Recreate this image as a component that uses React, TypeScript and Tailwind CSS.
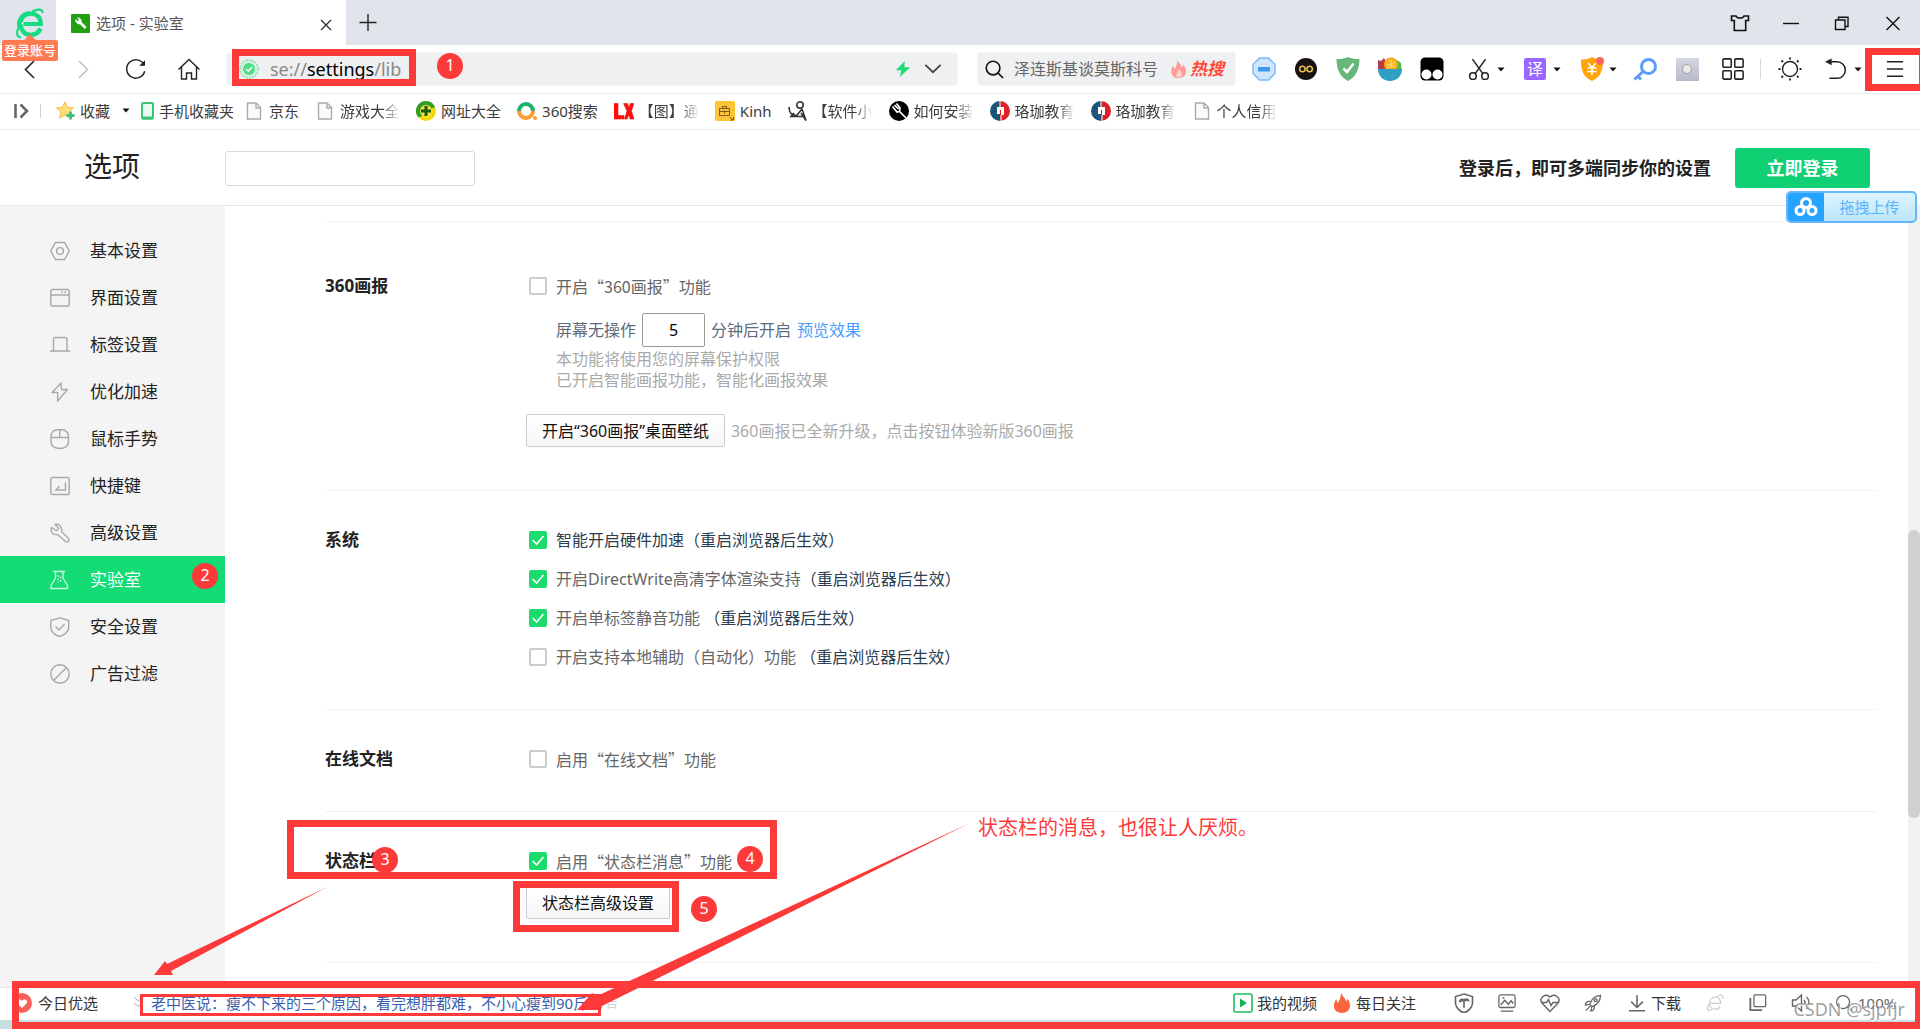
import React, { useState } from "react";

type SvgProps = { size?: number; box?: string; className?: string; children: React.ReactNode };

function Svg({ size = 20, box = "0 0 20 20", className = "", children }: SvgProps) {
  return (
    <svg width={size} height={size} viewBox={box} fill="none" stroke="currentColor" strokeWidth="1.4" className={"shrink-0 " + className} aria-hidden="true">
      {children}
    </svg>
  );
}

function Caret() {
  return (
    <svg width="8" height="5" viewBox="0 0 8 5" className="shrink-0" aria-hidden="true">
      <path d="M0.5 0.5h7L4 4.5z" fill="#111" />
    </svg>
  );
}

function Badge({ n, className }: { n: number; className: string }) {
  return (
    <span className={"absolute z-20 flex h-[26px] w-[26px] justify-center rounded-full bg-[#fd3a3a] text-base leading-6 text-white " + className}>{n}</span>
  );
}

/* ---------- title bar ---------- */

function TitleBar() {
  return (
    <header className="flex h-[45px] shrink-0 bg-[#e1e4ea]">
      <div className="relative flex w-14 shrink-0 justify-center pl-1">
        <svg width="30" height="31" viewBox="0 0 30 31" className="mt-2" aria-hidden="true">
          <path d="M15 5.2A11 11 0 0 0 5 20" fill="none" stroke="#15dc82" strokeWidth="4.4" />
          <path d="M8.5 16H25.8C25.8 9.5 21.5 5.6 15.6 5.6C10.5 5.6 6.5 9.2 5.8 14" fill="none" stroke="#15dc82" strokeWidth="4.2" />
          <path d="M25.5 20.5C23.5 25 20 27 15.6 27C9.5 27 5.6 22 6 16.5" fill="none" stroke="#15dc82" strokeWidth="4.4" />
          <path d="M27.5 5C28 1 23 0.5 17 3.8M5.5 16C1 23 0.8 29.5 6 29" fill="none" stroke="#15dc82" strokeWidth="2.2" />
        </svg>
        <button className="absolute left-0.5 top-10 z-20 h-[21px] w-[56px] rounded-[2px] bg-[#ff7a50] text-[13px] font-medium leading-[21px] text-white">
          登录账号
          <span className="absolute -top-1 left-6 h-2 w-2 rotate-45 bg-[#ff7a50]" />
        </button>
      </div>
      <div className="flex w-[290px] items-center bg-white pl-[15px] pr-2.5 text-[15px] text-[#555]">
        <Svg size={19} className="mt-0.5">
          <rect width="20" height="20" rx="1" fill="#20a010" stroke="none" />
          <path d="M5 5.5a4 4 0 0 0 4.4 5l5 5 1.8-1.9-5.2-4.9A4 4 0 0 0 6.8 4l2 2.2-1.6 1.7z" fill="#fff" stroke="#fff" strokeWidth="0.6" />
        </Svg>
        <span className="ml-1.5 grow leading-10">选项 - 实验室</span>
        <button aria-label="关闭标签" className="mt-1 text-[#333]">
          <Svg><path d="M5 5l10 10M15 5L5 15" /></Svg>
        </button>
      </div>
      <button aria-label="新建标签" className="ml-2.5 text-[#222]">
        <Svg size={24} box="0 0 24 24"><path d="M12 3v17M3.500 11.500h17" /></Svg>
      </button>
      <div className="ml-auto flex pr-0.5 text-[#111]">
        <button aria-label="皮肤" className="flex w-[51px] items-center justify-center">
          <Svg><path d="M1.500 3h4.500c1 2.700 7 2.700 8 0h4.500v4.500h-2.800v10H4.300v-10H1.500z" strokeWidth="1.600" /></Svg>
        </button>
        <button aria-label="最小化" className="flex w-[51px] items-center justify-center">
          <Svg><path d="M2 10.500h16" /></Svg>
        </button>
        <button aria-label="还原" className="flex w-[51px] items-center justify-center">
          <Svg><path d="M3.500 7h9.500v9.500H3.500zM6.500 7V4.200h9.500v9.300H13" /></Svg>
        </button>
        <button aria-label="关闭" className="flex w-[51px] items-center justify-center">
          <Svg><path d="M3.500 4l13 13M16.500 4l-13 13" /></Svg>
        </button>
      </div>
    </header>
  );
}

/* ---------- tool bar ---------- */

const navButton = "flex w-[53px] items-center justify-center";
const extButton = "flex w-[42px] items-center justify-center";
const menuButton = "flex w-14 items-center gap-[7px] pl-[15px]";

function ToolBar() {
  return (
    <div className="flex h-[49px] shrink-0 items-stretch border-b border-[#ececee] bg-white pl-[3px] text-[#222]">
      <button aria-label="后退" className={navButton}><Svg size={22} box="0 0 22 22"><path d="M15 3L6.500 11.500L15 20" strokeWidth="1.600" /></Svg></button>
      <button aria-label="前进" className={navButton + " text-[#bbb]"}><Svg size={22} box="0 0 22 22"><path d="M7 3L15.500 11.500L7 20" /></Svg></button>
      <button aria-label="刷新" className={navButton}>
        <Svg size={22} box="0 0 24 24"><path d="M20.500 7A10 10 0 1 0 21.500 14.500" strokeWidth="1.600" /><path d="M21.800 2.500V8.500H15.500z" fill="#222" stroke="none" /></Svg>
      </button>
      <button aria-label="主页" className={navButton}>
        <Svg size={24} box="0 0 24 24"><path d="M1.500 12.500L12 2.500L22.500 12.500M4.500 10v12h5v-6h5v6h5V10" strokeWidth="1.400" /></Svg>
      </button>
      <div className="relative ml-[11px] mt-[7px] flex h-[34px] min-w-0 grow items-center rounded-[4px] border border-[#f4f5f7] bg-[#eff0f2] pl-3 pr-[15px]">
        <Svg size={20}>
          <circle cx="10" cy="10" r="9" stroke="#7fe3a4" strokeDasharray="2 1" strokeWidth="1.500" />
          <circle cx="10" cy="10" r="7.200" stroke="#b9efcd" strokeWidth="1" />
          <circle cx="10" cy="10" r="6" fill="#4fdc88" stroke="none" />
          <path d="M7 10l2.300 2.200L13.200 8" stroke="#fff" />
        </Svg>
        <div className="ml-[11px] grow text-lg leading-8 text-[#888]">
          se://<span className="text-black">settings</span>/lib
        </div>
        <Svg size={18} className="mr-3"><path d="M12 1L2 11.500h6L6.500 19L18 8h-6.500z" fill="#1fdc74" stroke="none" /></Svg>
        <button aria-label="展开"><Svg size={18}><path d="M1.500 5.500L10 13.500L18.500 5.500" strokeWidth="2" stroke="#444" /></Svg></button>
        <span className="absolute -top-1 left-[5px] h-[37px] w-[184px] border-[7px] border-[#fd3a3a]" />
        <Badge n={1} className="left-[210px] top-0" />
      </div>
      <div className="ml-[19px] mt-[7px] flex h-[34px] w-[259px] shrink-0 items-center rounded-[4px] border border-[#f4f5f7] bg-[#eff0f2] pl-[7px] text-base">
        <Svg size={19}><circle cx="8.500" cy="8.500" r="7.200" stroke="#111" strokeWidth="1.700" /><path d="M13.500 13.500l5.500 5.500" stroke="#111" strokeWidth="1.700" /></Svg>
        <input aria-label="搜索" defaultValue="泽连斯基谈莫斯科号" className="ml-2 w-[154px] bg-transparent pl-0.5 leading-8 text-[#666] outline-none" />
        <Svg size={18} className="ml-1"><path d="M8 0c2 4 5 5 5 9 1-1 1.400-2.500 1.200-4C20 10 19 20 10 20C0 20 0 10 4 6c0 2 .5 3 1.500 4C7 7 8.500 4 8 0z" fill="#ff9c95" stroke="none" /><path d="M10 10c2 3 4 4 3 7c-1 3-6 3-6 0c0-2 2-4 3-7z" fill="#ffd5d1" stroke="none" /></Svg>
        <b className="ml-0.5 text-[17px] italic text-[#ff4a3c]">热搜</b>
      </div>
      <div className="ml-[7px] flex shrink-0">
        <button aria-label="拦截" className={extButton}>
          <Svg size={24} box="0 0 24 24"><path d="M7.500 1h9L23 7.500v9L16.500 23h-9L1 16.500v-9z" fill="#cfe6fd" stroke="#78b7fa" /><rect x="6" y="10" width="12" height="4.500" fill="#3f97f6" stroke="none" /></Svg>
        </button>
        <button aria-label="无限" className={extButton}>
          <Svg size={22}><circle cx="10" cy="10" r="10" fill="#181210" stroke="none" /><circle cx="6.700" cy="10" r="2.500" stroke="#e9bd4f" /><circle cx="13.300" cy="10" r="2.500" stroke="#e9bd4f" /></Svg>
        </button>
        <button aria-label="防护" className={extButton}>
          <Svg size={24} box="0 0 24 24"><path d="M12 0c4 1.800 8 2.300 11.500 2C23.500 12 20 20 12 24C4 20 .5 12 .5 2C4 2.300 8 1.800 12 0z" fill="#67b77a" stroke="none" /><path d="M7.500 11.500l3.500 3.500l6.500-8.500" stroke="#fff" strokeWidth="2.500" /></Svg>
        </button>
        <button aria-label="果篮" className={extButton}>
          <Svg size={24} box="0 0 24 24"><path d="M0 12V3l3 1l3-3l6 11z" fill="#b53c48" stroke="none" /><path d="M16 12l3-9l4 3l.5 6z" fill="#53b848" stroke="none" /><circle cx="13" cy="7.500" r="6.500" fill="#fbb61c" stroke="#f59a12" strokeWidth="1.200" /><path d="M13 3v8M8.500 7l9 3M17 5l-8 6" stroke="#ffe08a" strokeWidth="1" /><path d="M0 12h24c0 7-5 12-12 12S0 19 0 12z" fill="#2f9fc4" stroke="none" /></Svg>
        </button>
        <button aria-label="脚本" className={extButton}>
          <Svg size={24} box="0 0 24 24"><rect x=".5" y=".5" width="23" height="23" rx="4.500" fill="#000" stroke="none" /><circle cx="6.500" cy="17.500" r="5" fill="#fff" stroke="none" /><circle cx="17.500" cy="17.500" r="5" fill="#fff" stroke="none" /></Svg>
        </button>
        <button aria-label="截图" className={menuButton}>
          <Svg size={22}><circle cx="4.500" cy="16.500" r="3" /><circle cx="15.500" cy="16.500" r="3" /><path d="M4 1l9.500 13.200M16 1L6.500 14.200" /></Svg>
          <Caret />
        </button>
        <button aria-label="翻译" className={menuButton}>
          <span className="flex h-[22px] w-[22px] items-center justify-center rounded-[2px] bg-[#9966ff] text-base leading-none text-white">译</span>
          <Caret />
        </button>
        <button aria-label="优惠" className={menuButton}>
          <Svg size={24} box="0 0 24 24" className="-mr-0.5"><path d="M12 0c3 2 7 2.500 11 2.500C23 13 21 20 12 24C3 20 1 13 1 2.500C5 2.500 9 2 12 0z" fill="#ffa50a" stroke="none" /><path d="M8 6l4 4.500L16 6M12 10.500V18M7.500 11h9M7.500 14.500h9" stroke="#fff" strokeWidth="1.600" /><circle cx="20" cy="4" r="4" fill="#f96557" stroke="none" /></Svg>
          <Caret />
        </button>
        <button aria-label="密码" className={extButton + " ml-[3px]"}>
          <Svg size={24} box="0 0 24 24"><circle cx="15.500" cy="9.500" r="7" stroke="#5a9cf8" strokeWidth="3" /><path d="M10 14.500L1.500 22.500M5 19.500l3 3" stroke="#5a9cf8" strokeWidth="3" /></Svg>
        </button>
        <button aria-label="扩展" className={extButton}>
          <span className="flex h-[23px] w-[23px] items-center justify-center bg-gradient-to-b from-[#d3d7e0] to-[#b5bcc9]"><span className="h-2.5 w-2.5 rounded-full border border-[#a59f95] bg-[#e9e9ec]" /></span>
        </button>
        <button aria-label="应用" className="flex w-[50px] items-center justify-center">
          <Svg size={22}><rect x=".8" y=".8" width="7.600" height="7.600" rx="1" /><rect x="11.600" y=".8" width="7.600" height="7.600" rx="1" /><rect x=".8" y="11.600" width="7.600" height="7.600" rx="1" /><rect x="11.600" y="11.600" width="7.600" height="7.600" rx="1" /></Svg>
        </button>
        <span className="ml-0.5 h-5 w-px self-center bg-[#d8d8d8]" />
        <button aria-label="亮度" className="flex w-[58px] items-center justify-center">
          <Svg size={24} box="0 0 24 24"><circle cx="12" cy="12" r="7.500" /><path d="M12 .5v2M12 21.500v2M.5 12h2M21.500 12h2M3.500 3.500l1.500 1.500M19 19l1.500 1.500M3.500 20.500L5 19M19 5l1.500-1.500" strokeWidth="1.800" /></Svg>
        </button>
        <button aria-label="恢复" className="flex w-[50px] items-center gap-[7px] pl-1.5">
          <Svg size={22}><path d="M5 3.500h6a7.500 7.500 0 0 1 0 15H4" /><path d="M0 3.500L6 .5v6z" fill="#222" stroke="none" /></Svg>
          <Caret />
        </button>
        <button aria-label="菜单" className="relative flex w-[51px] items-center justify-center">
          <Svg size={18}><path d="M1 2h18M1 10h18M1 18h18" strokeWidth="1.700" /></Svg>
          <span className="absolute -right-1.5 left-[-4px] top-[3px] h-[43px] border-[7px] border-[#fd3a3a]" />
        </button>
      </div>
    </div>
  );
}

/* ---------- bookmarks ---------- */

function DocIcon() {
  return <Svg size={20}><path d="M3.500 2h8.500l4.500 4.500V18h-13z" fill="#fafafa" stroke="#aaa" /><path d="M12 2v5h4.500" stroke="#aaa" /></Svg>;
}

function LuojiaIcon() {
  return (
    <Svg size={20}>
      <path d="M10 0a10 10 0 0 0 0 20z" fill="#1d5579" stroke="none" />
      <path d="M10 0a10 10 0 0 1 0 20z" fill="#dd1f26" stroke="none" />
      <path d="M7 6h7v8h-3v-5H10v4H7z" fill="#fff" stroke="none" /><path d="M10 0v6M11 14v6" stroke="#fff" strokeWidth="1" />
    </Svg>
  );
}

const fade = "[mask-image:linear-gradient(to_right,#000_70%,transparent)]";

const bookmarks: { label: string; icon: React.ReactNode; faded?: boolean }[] = [
  { label: "京东", icon: <DocIcon /> },
  { label: "游戏大全", icon: <DocIcon />, faded: true },
  {
    label: "网址大全",
    icon: <Svg><circle cx="10" cy="10" r="10" fill="#f5d80c" stroke="none" /><path d="M10 0a10 10 0 0 0-8 16C7 17 9 10 19 6A10 10 0 0 0 10 0z" fill="#2f9e2d" stroke="none" /><circle cx="10" cy="10" r="6" fill="#f7e13a" stroke="none" /><path d="M10 5v10M5 10h10" stroke="#145c14" strokeWidth="3" /></Svg>,
  },
  {
    label: "360搜索",
    icon: <Svg><path d="M2 10a7 7 0 0 1 14 0" stroke="#1bb36b" strokeWidth="4" /><path d="M2 10a7 7 0 0 0 14 0" stroke="#fb9b34" strokeWidth="4" /><circle cx="18" cy="17" r="2" fill="#fb9b34" stroke="none" /></Svg>,
  },
  {
    label: "【图】通",
    faded: true,
    icon: <Svg><path d="M0 2.500h4v12h3v3.500H0zM7.500 14.500h2.500V18H7.500zM9.500 2.500h4l1.500 4l1.200-4H20l-2.600 7.500L20 18h-3.900l-1.400-4.500L13.200 18H10.500l2.500-8z" fill="#fb0f0c" stroke="#fb0f0c" strokeWidth="0.600" /></Svg>,
  },
  {
    label: "Kinh",
    icon: <Svg><rect width="20" height="20" rx="1.500" fill="#fdc536" stroke="none" /><path d="M4.500 7.500h10v7h-10zM7.500 7.500V5.500h4v2M4.500 10.500h10M9.500 9.500v3" stroke="#7a5a18" strokeWidth="1" /><path d="M15 16l3 3M18.500 16v3H15.500" stroke="#7a5a18" strokeWidth="1" /></Svg>,
  },
  {
    label: "【软件小",
    faded: true,
    icon: <Svg><circle cx="12" cy="4" r="3.200" stroke="#333" strokeWidth="1.600" /><path d="M1 6c0 6 3 9 8 8l5-6M6 12l-3 3.500h12M14 8l4 11.500L13 12" stroke="#333" strokeWidth="1.600" /></Svg>,
  },
  {
    label: "如何安装",
    faded: true,
    icon: <Svg><circle cx="10" cy="10" r="10" fill="#000" stroke="none" /><path d="M3.500 5.500L8 11l2.500-.5L17 17M5.500 4l4 4M7.500 2.500L11 7l-.5 3.500" stroke="#fff" strokeWidth="1.700" /></Svg>,
  },
  { label: "珞珈教育", icon: <LuojiaIcon />, faded: true },
  { label: "珞珈教育", icon: <LuojiaIcon />, faded: true },
  { label: "个人信用", icon: <DocIcon />, faded: true },
];

function Bookmarks() {
  return (
    <nav aria-label="收藏栏" className="flex h-9 shrink-0 items-center border-b border-[#ebebeb] bg-white pb-0.5 pl-3 text-[15px] leading-5 text-[#3c3c3c]">
      <button aria-label="侧边栏"><Svg><path d="M3.500 3v14" stroke="#666" strokeWidth="2.600" /><path d="M8.500 3.500L15 10l-6.500 6.500" stroke="#666" strokeWidth="2.600" /></Svg></button>
      <span className="ml-2 h-[14px] w-px bg-[#d0d0d0]" />
      <button className="ml-[15px] flex items-center gap-1">
        <Svg><path d="M9 .8l2.500 5.500l6 .7l-4.400 4.100l1.200 6L9 14.200L3.700 17l1.200-5.900L.5 7l6-.7z" fill="#fddc7a" stroke="#f6c043" strokeWidth="1" /><path d="M14.500 10.500v8M10.500 14.500h8" stroke="#3fc07c" strokeWidth="2.800" /></Svg>
        收藏
      </button>
      <button aria-label="收藏菜单" className="ml-3"><Caret /></button>
      <a href="#mobile" className="ml-2 mr-2.5 flex items-center gap-[5px]">
        <svg width="16" height="20" viewBox="0 0 16 20" fill="none" aria-hidden="true"><rect x="4" y="2" width="11" height="15.500" rx="1" fill="#e9fbf1" stroke="#3fc179" strokeWidth="2" /><path d="M4 17h11" stroke="#3fc179" strokeWidth="3" /></svg>
        手机收藏夹
      </a>
      <div className="flex gap-4">
        {bookmarks.map((b, i) => (
          <a key={i} href={"#bookmark-" + i} className="flex items-center gap-[5px] whitespace-nowrap">
            {b.icon}
            <span className={b.faded ? fade : ""}>{b.label}</span>
          </a>
        ))}
      </div>
    </nav>
  );
}

/* ---------- page header ---------- */

function PageHeader() {
  return (
    <div className="relative flex h-[76px] shrink-0 items-center border-b border-[#e8e8e8] bg-white pr-[50px] pt-px">
      <h1 className="w-[225px] shrink-0 pb-1 pl-[84px] text-[28px] leading-10 text-[#222]">选项</h1>
      <input aria-label="搜索设置" className="h-[35px] w-[250px] rounded-[3px] border border-[#d9d9d9] px-2 text-base outline-none" />
      <p className="ml-auto text-lg font-bold text-[#222]">登录后，即可多端同步你的设置</p>
      <button className="ml-6 h-10 w-[135px] rounded-[3px] bg-[#10d074] text-lg font-bold text-white">立即登录</button>
      <button className="absolute right-[3px] top-[61px] z-20 flex h-8 w-[131px] items-center overflow-hidden rounded-[5px] border-2 border-[#62b8fb] bg-gradient-to-b from-[#dcf4ff] to-[#bce6fd] text-[15px] text-[#5db4f4]">
        <span className="flex h-full w-9 items-center justify-center bg-[#26a2ff] text-white">
          <Svg size={24} box="0 0 24 24"><circle cx="12" cy="8" r="4.500" strokeWidth="3" /><circle cx="6" cy="15.500" r="4" strokeWidth="3" /><circle cx="18" cy="15.500" r="4" strokeWidth="3" /></Svg>
        </span>
        <span className="grow">拖拽上传</span>
      </button>
    </div>
  );
}

/* ---------- side menu ---------- */

const menu: { label: string; icon: React.ReactNode }[] = [
  { label: "基本设置", icon: <Svg><path d="M5.500 1.500h9L19.300 10l-4.800 8.500h-9L.7 10z" /><circle cx="10" cy="10" r="3.400" /></Svg> },
  { label: "界面设置", icon: <Svg><rect x=".8" y="1.500" width="18.400" height="16.500" rx="1.800" /><path d="M1 7h18M11 4.300h1.500M14.500 4.300H16" /></Svg> },
  { label: "标签设置", icon: <Svg><path d="M0 16h20M3.500 16V4.500a2 2 0 0 1 2-2h9.500a2 2 0 0 1 2 2V16" /></Svg> },
  { label: "优化加速", icon: <Svg><path d="M11 1L2 10.500h5.800L7.500 19l10-11.500h-6z" strokeLinejoin="round" /></Svg> },
  { label: "鼠标手势", icon: <Svg><rect x="1" y=".8" width="17.500" height="18.400" rx="6.500" /><path d="M1 8.500h17.500M9.700 1v7.500" /></Svg> },
  { label: "快捷键", icon: <Svg><rect x=".8" y="1.500" width="18.400" height="17" rx="1.500" /><path d="M15.500 6.500v7.500H6l3.500-4" /></Svg> },
  { label: "高级设置", icon: <Svg><path d="M5 1.500l3.800 3.700-2.500 2.500-4.500-3.200C-.5 8 2.500 12.500 7.500 11.500l8 7a2 2 0 0 0 3-3L11.500 8.500C12.500 4 9 .2 5 1.500z" strokeLinejoin="round" /></Svg> },
  { label: "实验室", icon: <Svg><path d="M3 1.500h12M5.500 1.500v6.500L1 15.500v3h16.500v-3L13 8V1.500" /><path d="M8 5v8M10.500 6.500v7" strokeDasharray="2 1.500" strokeWidth="1.200" /></Svg> },
  { label: "安全设置", icon: <Svg><path d="M9.700 .8l9 2.700v7C18.500 15 14 18.500 9.700 19.400C5 18.500 1 15 .8 10.500v-7z" strokeLinejoin="round" /><path d="M5.500 9.500l3.500 3.500l5.500-6" /></Svg> },
  { label: "广告过滤", icon: <Svg><circle cx="10" cy="10" r="9.200" /><path d="M16.500 3.500l-13 13" /></Svg> },
];

function SideMenu() {
  return (
    <nav aria-label="设置分类" className="w-[225px] shrink-0 bg-[#f4f4f4] pt-[21px]">
      {menu.map((m) => {
        const active = m.label === "实验室";
        return (
          <a
            key={m.label}
            href={"#" + m.label}
            aria-current={active ? "page" : undefined}
            className={"relative flex h-[47px] items-center gap-5 pl-[50px] text-[17px] " + (active ? "bg-[#12dc73] text-white" : "text-[#222]")}
          >
            <span className={active ? "text-[#c9f7dd]" : "text-[#a8a8a8]"}>{m.icon}</span>
            {m.label}
            {active && <Badge n={2} className="left-48 top-[7px]" />}
          </a>
        );
      })}
    </nav>
  );
}

/* ---------- settings ---------- */

const cjk = "font-['Noto_Sans_CJK_SC',sans-serif]";

function Check({ on = false, children }: { on?: boolean; children: React.ReactNode }) {
  const [checked, setChecked] = useState(on);
  return (
    <label className="relative flex h-[39px] w-fit items-center whitespace-pre pl-[3px] text-[#666]">
      <input
        type="checkbox"
        checked={checked}
        onChange={() => setChecked(!checked)}
        className="mr-[9px] h-[18px] w-[18px] appearance-none rounded-[2px] border-2 border-[#ccc] bg-white checked:border-[#1bdb6c] checked:bg-[#1bdb6c]"
      />
      {checked && (
        <Svg size={18} className="pointer-events-none absolute left-[3px]"><path d="M4 10l4.500 4.500L16 5.500" stroke="#fff" strokeWidth="1.800" /></Svg>
      )}
      {children}
    </label>
  );
}

function Section({ title, className = "pt-[29px]", children, overlay }: { title?: string; className?: string; children?: React.ReactNode; overlay?: React.ReactNode }) {
  return (
    <section className={"relative flex border-t border-[#f1f1f1] pb-[33px] text-base " + className}>
      <h2 className="w-[201px] shrink-0 text-[17px] font-bold leading-[39px] text-[#222]">{title}</h2>
      <div className="min-w-0 grow">{children}</div>
      {overlay}
    </section>
  );
}

const plainButton = "h-[33px] rounded-[2px] border border-[#ccc] bg-gradient-to-b from-white to-[#f6f6f6] px-[15px] text-base text-[#111]";

function Restart() {
  return <span className="text-[#2c3e50]">（重启浏览器后生效）</span>;
}

function Settings() {
  return (
    <main className="min-w-0 grow overflow-hidden bg-white pl-[100px] pr-[31px] pt-[15px]">
      <Section title="360画报" className="pt-11">
        <Check><span className={cjk}>开启“360画报”功能</span></Check>
        <div className="mt-2 flex h-[34px] items-center pl-[30px] text-[#5c6b7c]">
          <label htmlFor="idle">屏幕无操作</label>
          <input id="idle" defaultValue="5" className="mx-[6px] h-[34px] w-[63px] rounded-[2px] border border-[#999] text-center text-black outline-none" />
          分钟后开启
          <a href="#preview" className="ml-[6px] text-[#4a9cff]">预览效果</a>
        </div>
        <p className="mt-0.5 pl-[30px] leading-[21px] text-[#aaa]">
          本功能将使用您的屏幕保护权限<br />已开启智能画报功能，智能化画报效果
        </p>
        <div className="mb-2.5 mt-[23px] flex items-center gap-[6px] text-[#aaa]">
          <button className={plainButton}>开启“360画报”桌面壁纸</button>
          360画报已全新升级，点击按钮体验新版360画报
        </div>
      </Section>
      <Section title="系统">
        <Check on><span className="text-[#2c3e50]">智能开启硬件加速</span><Restart /></Check>
        <Check on>开启DirectWrite高清字体渲染支持<Restart /></Check>
        <Check on>开启单标签静音功能 <Restart /></Check>
        <Check>开启支持本地辅助（自动化）功能 <Restart /></Check>
      </Section>
      <Section title="在线文档">
        <Check><span className={cjk}>启用“在线文档”功能</span></Check>
      </Section>
      <Section
        title="状态栏"
        overlay={
          <>
            <span className="pointer-events-none absolute -left-[38px] top-2 h-[59px] w-[490px] border-[7px] border-[#fd3a3a]" />
            <span className="pointer-events-none absolute left-[188px] top-[69px] h-[51px] w-[166px] border-[7px] border-[#fd3a3a]" />
            <Badge n={3} className="left-[47px] top-[35px]" />
            <Badge n={4} className="left-[412px] top-[34px]" />
            <Badge n={5} className="left-[366px] top-[84px]" />
            <span className="absolute left-[653px] top-0 text-xl leading-8 text-[#fd3a3a]">状态栏的消息，也很让人厌烦。</span>
          </>
        }
      >
        <Check on><span className={cjk}>启用“状态栏消息”功能</span></Check>
        <button className={plainButton + " mb-2.5 mt-1.5 block"}>状态栏高级设置</button>
      </Section>
      <Section />
    </main>
  );
}

/* ---------- status bar ---------- */

const statusIcon = "flex w-[43px] items-center justify-center";

function StatusBar() {
  return (
    <footer className="relative flex h-[42px] shrink-0 flex-col bg-[#c8dfe2] text-[15px] text-[#333]">
      <div className="flex h-[33px] items-center border-t border-[#e6e6e6] bg-white pb-0.5 pl-3 text-[#666]">
        <button className="flex items-center gap-1.5 text-[#333]">
          <Svg><circle cx="10" cy="10" r="10" fill="#f9605c" stroke="none" /><path d="M10 15L5.500 10.500C3.500 7.500 7.500 4.500 10 8C12.500 4.500 16.500 7.500 14.500 10.500z" fill="#fff" stroke="none" /></Svg>
          今日优选
        </button>
        <Svg size={14} className="ml-[34px] mr-[5px] text-[#aaa]"><path d="M3 2l6 5 6-5M3 10l6 5 6-5" /></Svg>
        <a href="#news" className="whitespace-nowrap text-[#3a5fb0]">老中医说：瘦不下来的三个原因，看完想胖都难，不小心瘦到90斤</a>
        <span className="ml-1 text-[13px] text-[#d5d5d5]">广告</span>
        <div className="ml-auto flex shrink-0 items-center">
          <button className="flex items-center gap-1 text-[#333]">
            <Svg><rect x="1" y="1" width="18" height="18" rx="1.500" stroke="#19bf62" strokeWidth="1.600" /><path d="M7 5.500v9l7-4.500z" fill="#12b457" stroke="none" /></Svg>
            我的视频
          </button>
          <button className="ml-[15px] flex items-center gap-1 text-[#333]">
            <Svg><path d="M9 0c2 4 4.500 5 5 8.500c1-.8 1.400-2 1.200-3C20 11 19 20 10 20S0 11 4.500 6c0 1.500.5 3 1.500 4C7.500 7 9 4 9 0z" fill="#fc6440" stroke="none" /></Svg>
            每日关注
          </button>
          <button aria-label="护眼" className={statusIcon + " ml-[26px]"}><Svg><path d="M10 1l8.500 2.500v7C18 15 14 18.500 10 19.500C6 18.500 2 15 1.500 10.500v-7z" strokeWidth="1.600" /><path d="M5.500 9c.5-3 3.500-3.500 4.500-1.500c.5-2 4-2 4.500 0c-1.500-.5-3-.5-4.500 .5V15M5.500 9c1.500-1 3-1.500 4.500-1" strokeWidth="1.600" /></Svg></button>
          <button aria-label="图片" className={statusIcon}><Svg size={18}><rect x="1" y="1" width="18" height="14" rx="2" /><path d="M3 12l4.500-5l4 4.500l3-4l2.500 3M3 19h14M5 4.500h2" strokeWidth="1.600" /></Svg></button>
          <button aria-label="健康" className={statusIcon}><Svg><path d="M10 18.500L2 10C-1.500 5 5.500-.5 10 4C14.500-.5 21.500 5 18 10z" /><path d="M2 9.500h4.500L8.500 6.500l2.500 6l2-3h5" /></Svg></button>
          <button aria-label="加速" className={statusIcon}><Svg size={18}><path d="M18.500 1.500C12 2 8 6 6.500 11.500l2.500 2.500C15 12 18 8 18.500 1.500zM7 8.500C4 7 1 10.500 1.500 12.500c1.500-1 3-1 5-1M11 13c1.500 3.500-1 6-3.500 5.800c1.200-1.500 1.200-3 1-5M2 18.500l5-5" /><circle cx="13" cy="7" r="1.600" /></Svg></button>
          <button className="flex w-[79px] items-center gap-[5px] pl-3.5 text-[#333]"><Svg size={18}><path d="M10 1v13M3.500 8.500L10 15l6.500-6.500M1 18.500h18" stroke="#666" strokeWidth="1.700" /></Svg>下载</button>
          <button aria-label="兼容模式" className={statusIcon + " text-[#ccc]"}><Svg size={18}><path d="M5 10.500h11C16.500 6 14 3.500 10.500 3.500c-8.500 0-8.500 13.500 0 13.500c2.500 0 4-1 5-3M12 3C17 0 20 1 18.500 5M3.500 11C0 17 1.500 20 6.500 17" /></Svg></button>
          <button aria-label="分屏" className={statusIcon}><Svg size={18}><rect x="5.500" y="1" width="13" height="13" rx="1" /><path d="M1.500 4.500v13.500h13" strokeWidth="2" /></Svg></button>
          <button aria-label="声音" className={statusIcon}><Svg><path d="M1.500 7H5l5.500-5v16L5 13H1.500zM13 7c1.500 1.500 1.500 4.500 0 6M15.500 4c3.500 3 3.500 9 0 12" /></Svg></button>
          <button className="flex w-[98px] items-center gap-[5px] pl-[13px]"><Svg size={18}><circle cx="9" cy="9" r="7.200" /><path d="M14 14l5 5" /></Svg>100%</button>
        </div>
      </div>
      <span className="pointer-events-none absolute -right-0.5 bottom-0 left-3 h-12 border-[7px] border-[#fd3a3a]" />
      <span className="pointer-events-none absolute left-[140px] top-[7px] h-[22px] w-[461px] border-[3px] border-[#fd3a3a]" />
      <span className="pointer-events-none absolute bottom-2 right-[15px] z-20 text-lg leading-6 text-[#888]/80 [text-shadow:1px_1px_0_white]">CSDN @sjpfjr</span>
    </footer>
  );
}

/* Hand-drawn pointers from the notes to the status bar. */
function Arrows() {
  return (
    <svg width="1000" height="220" viewBox="0 0 1000 220" className="pointer-events-none absolute bottom-0 left-0 z-10" fill="#fd3a3a" aria-hidden="true">
      <path d="M327 78L171 162L173 166L154 166L165 152L167 155z" />
      <path d="M970 14L602 197L601 201L577 201L592 184L597 187z" />
    </svg>
  );
}

export default function App() {
  return (
    <div className="relative flex h-screen flex-col overflow-hidden bg-white font-['Noto_Sans','Noto_Sans_CJK_SC',sans-serif]">
      <TitleBar />
      <ToolBar />
      <Bookmarks />
      <PageHeader />
      <div className="flex min-h-0 grow">
        <SideMenu />
        <Settings />
        <div className="flex w-3 shrink-0 flex-col bg-[#f1f1f1]">
          <div className="grow-[324]" />
          <div className="grow-[288] rounded-full bg-[#d0d0d0]" />
          <div className="grow-[169]" />
        </div>
      </div>
      <StatusBar />
      <Arrows />
    </div>
  );
}
